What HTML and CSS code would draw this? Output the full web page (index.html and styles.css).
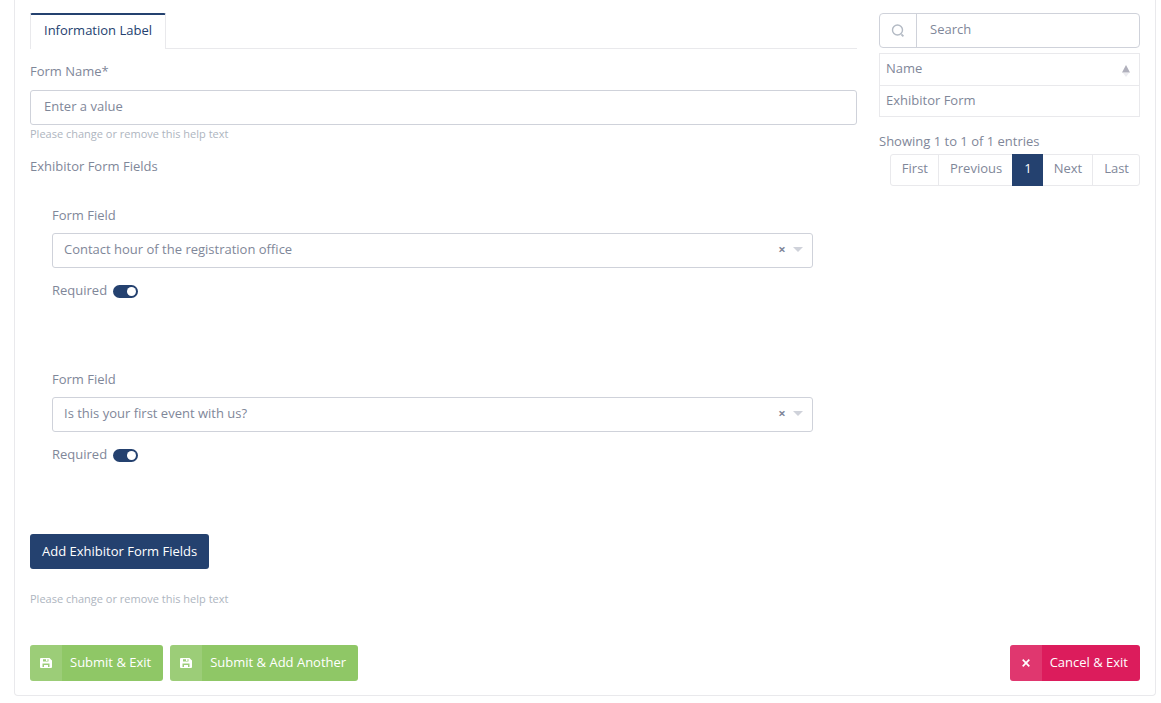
FILE: index.html
```html
<!DOCTYPE html>
<html lang="en">
<head>
    <meta charset="utf-8">
    <meta name="viewport" content="width=device-width, initial-scale=1">
    <title>Exhibitor Form</title>
    <link rel="stylesheet" href="styles.css">
</head>
<body>
    <div class="card">
        <div class="columns">
            <form class="main" id="exhibitor_form">
                <div class="tabs">
                    <a class="tab" href="#info">Information Label</a>
                </div>

                <div id="info">
                    <label class="label" for="form_name">Form Name*</label>
                    <input class="text_input" type="text" id="form_name" placeholder="Enter a value">
                    <p class="help">Please change or remove this help text</p>

                    <p class="label fields_title">Exhibitor Form Fields</p>

                    <div class="fields">
                        <div class="field">
                            <label class="label" for="field1">Form Field</label>
                            <div class="select_box">
                                <select class="select" id="field1">
                                    <option>Contact hour of the registration office</option>
                                    <option>Is this your first event with us?</option>
                                </select>
                                <button class="clear" type="button" aria-label="Clear">×</button>
                                <span class="arrow"></span>
                            </div>
                            <div class="required">
                                <label for="required1">Required</label>
                                <input class="switch" type="checkbox" id="required1" checked>
                            </div>
                        </div>

                        <div class="field">
                            <label class="label" for="field2">Form Field</label>
                            <div class="select_box">
                                <select class="select" id="field2">
                                    <option>Contact hour of the registration office</option>
                                    <option selected>Is this your first event with us?</option>
                                </select>
                                <button class="clear" type="button" aria-label="Clear">×</button>
                                <span class="arrow"></span>
                            </div>
                            <div class="required">
                                <label for="required2">Required</label>
                                <input class="switch" type="checkbox" id="required2" checked>
                            </div>
                        </div>
                    </div>

                    <button class="add_button" type="button">Add Exhibitor Form Fields</button>
                    <p class="help add_help">Please change or remove this help text</p>
                </div>
            </form>

            <div class="side">
                <div class="search">
                    <label class="search_icon" for="search" aria-label="Search">
                        <svg width="14" height="14" viewBox="0 0 14 14" fill="none" stroke="#b3bac4">
                            <circle cx="6.5" cy="6" r="5" stroke-width="1.4"/>
                            <path d="M10.4 10.400l2 2" stroke-width="1.800"/>
                        </svg>
                    </label>
                    <input class="search_input" type="text" id="search" placeholder="Search">
                </div>
                <table class="table">
                    <thead>
                        <tr>
                            <th>
                                <div class="sort">
                                    Name
                                    <svg width="8" height="12" viewBox="0 0 8 12">
                                        <path d="M4 0l4 7.500H0z" fill="#b0b0bc"/>
                                        <path d="M1 8h6l-3 4z" fill="#ececf0"/>
                                    </svg>
                                </div>
                            </th>
                        </tr>
                    </thead>
                    <tbody>
                        <tr><td>Exhibitor Form</td></tr>
                    </tbody>
                </table>
                <p class="info">Showing 1 to 1 of 1 entries</p>
                <nav class="pages">
                    <a class="page" href="#first">First</a>
                    <a class="page" href="#previous">Previous</a>
                    <a class="page active" href="#1">1</a>
                    <a class="page" href="#next">Next</a>
                    <a class="page" href="#last">Last</a>
                </nav>
            </div>
        </div>

        <div class="actions">
            <button class="action" type="submit" form="exhibitor_form">
                <span class="action_icon">
                    <svg width="12" height="12" viewBox="0 0 12 12">
                        <path fill="#fff" fill-rule="evenodd" d="M1 1h8.500L12 3.500V10a1 1 0 0 1-1 1H1a1 1 0 0 1-1-1V2a1 1 0 0 1 1-1zM3 2.200v2.300h5.500V2.200zM2.500 6.500v3.500h7V6.500z"/>
                        <path fill="#fff" d="M6 2h1.500v2H6zM4 8h4v2H4z"/>
                    </svg>
                </span>
                <span class="action_text">Submit &amp; Exit</span>
            </button>
            <button class="action" type="submit" form="exhibitor_form">
                <span class="action_icon">
                    <svg width="12" height="12" viewBox="0 0 12 12">
                        <path fill="#fff" fill-rule="evenodd" d="M1 1h8.500L12 3.500V10a1 1 0 0 1-1 1H1a1 1 0 0 1-1-1V2a1 1 0 0 1 1-1zM3 2.200v2.300h5.500V2.200zM2.500 6.500v3.500h7V6.500z"/>
                        <path fill="#fff" d="M6 2h1.500v2H6zM4 8h4v2H4z"/>
                    </svg>
                </span>
                <span class="action_text">Submit &amp; Add Another</span>
            </button>
            <button class="action cancel" type="button">
                <span class="action_icon">
                    <svg width="8" height="8" viewBox="0 0 8 8">
                        <path d="M.7.700l6.600 6.600M7.300.700L.7 7.300" stroke="#fff" stroke-width="1.700"/>
                    </svg>
                </span>
                <span class="action_text">Cancel &amp; Exit</span>
            </button>
        </div>
    </div>
</body>
</html>
```
FILE: styles.css
```css
*{
    box-sizing:border-box;
}

body{
    margin:0;
    background-color:white;
    color:#7f8799;
    font-family:"Open Sans", sans-serif;
    font-size:13px;
    line-height:20px;
}

button, input, select{
    font:inherit;
    color:inherit;
    margin:0;
}

button{
    cursor:pointer;
}

p{
    margin:0;
}

a{
    color:inherit;
    text-decoration:none;
}

svg{
    display:block;
}

.card{
    margin:0 5px 0 14px;
    padding:13px 15px 14px;
    border:1px solid #e9e9ec;
    border-top:none;
    border-radius:0 0 4px 4px;
}

.columns{
    display:grid;
    grid-template-columns:minmax(0, 827fr) minmax(0, 261fr);
    gap:22px;
}

/* tabs */
.tabs{
    display:flex;
    border-bottom:1px solid #e9e9ec;
    margin-bottom:12px;
}

.tab{
    height:36px;
    margin-bottom:-1px;
    padding:5px 13px;
    border:1px solid #e9e9ec;
    border-top:2px solid #24416f;
    border-bottom:none;
    border-radius:2px 2px 0 0;
    background-color:white;
    color:#24416f;
}

.label{
    display:block;
}

.text_input{
    display:block;
    width:100%;
    height:35px;
    margin-top:9px;
    padding:4px 13px 8px;
    border:1px solid #cfd2da;
    border-radius:3px;
}

input::placeholder{
    color:#7f8799;
    opacity:1;
}

.help{
    font-size:11px;
    line-height:18px;
    color:#aeb5c0;
}

.fields_title{
    margin-top:13px;
    margin-bottom:29px;
}

/* form fields */
.fields{
    display:flex;
    flex-direction:column;
    gap:69px;
    margin:0 44px 70px 22px;
}

.select_box{
    position:relative;
    margin-top:8px;
}

.select{
    display:block;
    appearance:none;
    width:100%;
    height:35px;
    padding:4px 50px 8px 11px;
    border:1px solid #cfd2da;
    border-radius:3px;
    background-color:white;
}

.clear{
    position:absolute;
    top:6px;
    right:26px;
    padding:0;
    border:none;
    background:none;
    font-weight:bold;
    width:10px;
}

.arrow{
    position:absolute;
    top:14px;
    right:10px;
    border:5px solid transparent;
    border-top-color:#cfd2da;
    border-bottom:none;
    pointer-events:none;
}

.required{
    display:flex;
    align-items:center;
    gap:6px;
    margin-top:12px;
}

.switch{
    appearance:none;
    display:flex;
    align-items:center;
    width:25px;
    height:13px;
    margin-top:2px;
    padding:2px;
    border-radius:7px;
    background-color:#cfd2da;
}

.switch::before{
    content:"";
    width:9px;
    height:9px;
    border-radius:50%;
    background-color:white;
}

.switch:checked{
    justify-content:flex-end;
    background-color:#24416f;
}

.add_button{
    display:block;
    height:35px;
    padding:0 12px 2px;
    border:none;
    border-radius:3px;
    background-color:#24416f;
    color:white;
}

.add_help{
    margin-top:21px;
}

/* right side */
.search{
    display:flex;
    height:35px;
    border:1px solid #cfd2da;
    border-radius:4px;
}

.search_icon{
    display:flex;
    align-items:center;
    justify-content:center;
    width:37px;
    border-right:1px solid #cfd2da;
}

.search_input{
    flex:1;
    min-width:0;
    padding:0 13px 3px;
    border:none;
    background:none;
}

.table{
    width:100%;
    margin-top:5px;
    border-collapse:collapse;
}

.table th,
.table td{
    padding:4px 6px 6px;
    border:1px solid #e9e9ec;
    font-weight:normal;
    text-align:left;
}

.table th{
    padding-bottom:7px;
}

.sort{
    display:flex;
    align-items:center;
    justify-content:space-between;
    padding-right:3px;
}

.sort svg{
    margin-top:5px;
}

.info{
    margin-top:14px;
}

.pages{
    display:flex;
    justify-content:flex-end;
    margin-top:3px;
}

.page{
    margin-left:-1px;
    padding:3px 10px 7px 11px;
    border:1px solid #e9e9ec;
}

.page:first-child{
    border-radius:3px 0 0 3px;
}

.page:last-child{
    border-radius:0 3px 3px 0;
}

.page.active{
    position:relative;
    border-color:#24416f;
    background-color:#24416f;
    color:white;
}

/* bottom buttons */
.actions{
    display:flex;
    gap:7px;
    margin-top:37px;
}

.action{
    display:flex;
    height:36px;
    padding:0;
    border:none;
    border-radius:3px;
    overflow:hidden;
    background-color:#8fc766;
    color:white;
}

.action_icon{
    display:flex;
    align-items:center;
    justify-content:center;
    width:32px;
    height:36px;
    background-color:rgba(255, 255, 255, 0.12);
}

.action_text{
    padding:7px 12px 9px 8px;
}

.cancel{
    margin-left:auto;
    background-color:#dc1c5c;
}
```
